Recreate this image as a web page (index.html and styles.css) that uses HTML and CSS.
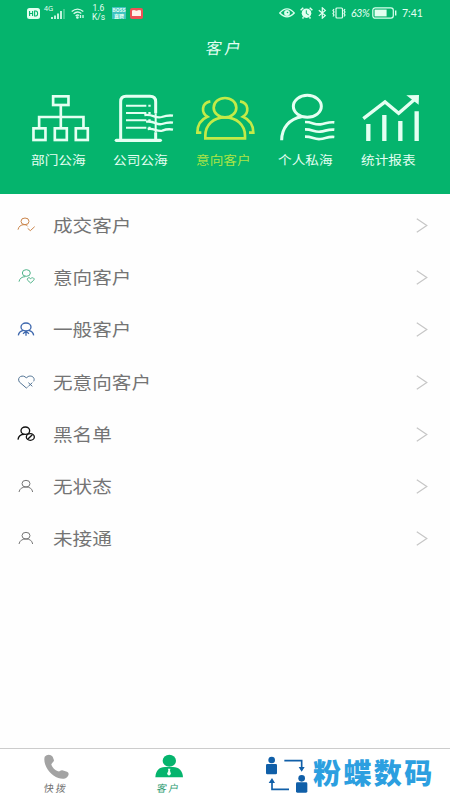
FILE: index.html
```html
<!DOCTYPE html>
<html lang="zh-CN">
<head>
<meta charset="utf-8">
<title>客户</title>
<link rel="stylesheet" href="styles.css">
</head>
<body>
<div class="app">
  <header class="top">
    <div class="status">
      <div class="status-left">
        <svg class="hd" width="13" height="11" viewBox="0 0 13 11"><rect width="13" height="11" rx="2.5" fill="#e2fff0"/><path d="M2.6 3v5M5.6 3v5M2.6 5.5h3M7.6 3v5h1.2q1.8 0 1.8-2.5T8.800 3z" fill="none" stroke="#05b46d" stroke-width="1.1"/></svg>
        <span class="net">4G</span>
        <svg class="signal" width="14" height="11" viewBox="0 0 14 11"><path d="M1 11V9M4 11V7.500M7 11V5.500M10 11V3" stroke="#e2fff0" stroke-width="1.700"/><path d="M13 11V1" stroke="#62d5a2" stroke-width="1.400"/></svg>
        <svg class="wifi" width="14" height="11" viewBox="0 0 14 11" fill="none" stroke="#d5fae8" stroke-width="1.300"><path d="M.7 3.600Q6.500-1.400 12.300 3.600M2.600 5.800Q6.500 2.300 10.300 5.600M4.600 7.900q2-1.700 3.600-.3"/><circle cx="6.400" cy="9.500" r=".7"/><path d="M9.500 7v3M12 7v3"/></svg>
        <span class="speed">1.6<br>K/s</span>
        <span class="tag">BOSS<br>直聘</span>
        <svg class="book" width="13" height="11" viewBox="0 0 13 11"><rect width="13" height="11" rx="2" fill="#ed5155"/><path d="M2 2.600l2-.6 2.500.7L9 2l2 .6V8H2z" fill="#fff1e8"/></svg>
      </div>
      <div class="status-right">
        <svg width="16" height="10" viewBox="0 0 16 10"><path d="M.7 5Q8-3.300 15.300 5 8 12.700.7 5z" fill="none" stroke="#d9ffed" stroke-width="1.200"/><circle cx="8" cy="5" r="2.900" fill="#d9ffed"/><circle cx="8.500" cy="4.500" r=".8" fill="#05b46d"/></svg>
        <svg class="alarm" width="13" height="12" viewBox="0 0 13 12"><circle cx="6.500" cy="6.200" r="4.800" fill="#e2fff0"/><path d="M.6 3.200L3.300.8M12.400 3.200L9.700.8M2.500 11.500l1-1.300M10.500 11.500l-1-1.300" stroke="#e2fff0" stroke-width="1.500"/><path d="M6.300 3.300v3.200l2.400 1.300" fill="none" stroke="#05b46d"/></svg>
        <svg class="bt" width="9" height="12" viewBox="0 0 9 12"><path d="M.8 3.200l6.500 5.300-3 2.700V.8l3 2.600L.8 8.900" fill="none" stroke="#e2fff0" stroke-width="1.200"/></svg>
        <svg class="vib" width="17" height="12" viewBox="0 0 17 12" fill="none" stroke="#e2fff0" stroke-width="1.200"><rect x="5" y="1" width="6.500" height="10" rx="1"/><path d="M3 2L2 3.500 3 5 2 6.500 3 8 2 9.500M14 2l-1 1.500L14 5l-1 1.500L14 8l-1 1.500"/></svg>
        <span class="pct">63%</span>
        <svg class="battery" width="26" height="12" viewBox="0 0 26 12"><rect x=".8" y=".8" width="20.500" height="10.400" rx="2.400" fill="none" stroke="#d9ffed" stroke-width="1.200"/><rect x="2.600" y="2.600" width="12" height="6.800" fill="#e2fff0"/><path d="M23.700 3.500v5" stroke="#d9ffed" stroke-width="1.400"/></svg>
        <span class="time">7:41</span>
      </div>
    </div>
    <h1 class="title"><span class="brush">客户</span></h1>
    <nav class="cats">
      <div class="cat">
        <svg viewBox="24.600 24 180 150"><g stroke-width="8"><rect x="100" y="34" width="46" height="26"/><path d="M123 60v68M58 128V96h133v32"/><rect x="41" y="130" width="36" height="35"/><rect x="105" y="130" width="36" height="35"/><rect x="168" y="130" width="36" height="35"/></g></svg>
        <span class="label">部门公海</span>
      </div>
      <div class="cat">
        <svg viewBox="272 24 180 150"><path d="M301 164V50q0-16 16-16h72q17 0 17 16v35M406 142v22" stroke-width="9"/><path d="M288 166h132" stroke-width="10" stroke-linecap="round"/><path d="M317 62h61M317 84h61M317 106h61M317 128h61" stroke-width="6"/><path d="M384 62h7M384 84h7M384 106h7M384 128h7M406 85v57" stroke-width="6"/><path d="M372 90c28-4 32 12 52 6 12-4 20-6 34-4M377 110c28-4 30 12 48 7 12-4 20-6 33-4M382 132c20-4 26 9 44 5 10-4 18-6 32-3" stroke-width="7"/></svg>
        <span class="label">公司公海</span>
      </div>
      <div class="cat active">
        <svg viewBox="40 24 180 150"><g stroke-width="8"><ellipse cx="136" cy="68" rx="34" ry="29"/><path d="M77 160v-8c0-32 24-55 59-55s60 23 60 55v8zM92 49c-28 5-27 35-9 46-21 9-30 26-30 48h12M181 49c28 5 27 35 9 46 21 9 31 26 31 48h-13"/></g></svg>
        <span class="label">意向客户</span>
      </div>
      <div class="cat">
        <svg viewBox="287 24 180 150"><g stroke-width="9"><ellipse cx="381" cy="64" rx="42" ry="33"/><path d="M304 166c0-38 24-65 60-71"/></g><path d="M374 111c24 0 27 9 46 7 16-2 24-8 42-6M374 133c24 0 27 9 46 7 16-2 24-8 42-6M374 155c24 0 27 9 46 7 16-2 24-8 42-6" stroke-width="8"/></svg>
        <span class="label">个人私海</span>
      </div>
      <div class="cat">
        <svg viewBox="85 24 180 150"><path d="M116 168v-51M164 168V90M212 168v-60M261 168V79" stroke-width="13"/><path d="M101 101l65-50 41 34 50-44" stroke-width="10"/><path class="solid" d="M230 31l38-1-1 29z"/></svg>
        <span class="label">统计报表</span>
      </div>
    </nav>
  </header>

  <main class="list">
    <div class="row"><svg class="ic orange" viewBox="0 0 54 54"><ellipse cx="24" cy="16" rx="12" ry="10"/><path d="M3 41c2-10 9-15 18-15 6 0 9 2 11 5M32 37l8 7 13-12"/></svg><span class="text">成交客户</span><svg class="arrow" viewBox="0 0 12 15"><path d="M.8.8l10 6.700-10 6.700"/></svg></div>
    <div class="row"><svg class="ic green" viewBox="0 0 54 54"><ellipse cx="28" cy="15" rx="12" ry="10"/><path d="M6 41c2-10 9-15 19-15M41 45l-9-8c-4-6 4-11 9-5 5-6 14-1 9 5z"/></svg><span class="text">意向客户</span><svg class="arrow" viewBox="0 0 12 15"><path d="M.8.8l10 6.700-10 6.700"/></svg></div>
    <div class="row"><svg class="ic blue" viewBox="0 0 54 54"><ellipse cx="27" cy="18" rx="15" ry="12"/><path d="M4 43c1-8 7-13 15-15M50 43c-1-8-7-13-15-15M27 44V31M18 38l9-7 9 7"/></svg><span class="text">一般客户</span><svg class="arrow" viewBox="0 0 12 15"><path d="M.8.8l10 6.700-10 6.700"/></svg></div>
    <div class="row"><svg class="ic navy" viewBox="0 0 54 54"><path d="M32 42l-4 3L7 27C-2 11 19 3 28 15 37 3 57 11 50 25M34 29l12 11M46 29L34 40"/></svg><span class="text">无意向客户</span><svg class="arrow" viewBox="0 0 12 15"><path d="M.8.8l10 6.700-10 6.700"/></svg></div>
    <div class="row"><svg class="ic black" viewBox="0 0 54 54"><ellipse cx="25" cy="17" rx="13" ry="11"/><path d="M3 44c1-10 8-16 19-16M32 43l14-14"/><ellipse cx="40" cy="36" rx="12" ry="10"/></svg><span class="text">黑名单</span><svg class="arrow" viewBox="0 0 12 15"><path d="M.8.8l10 6.700-10 6.700"/></svg></div>
    <div class="row"><svg class="ic gray" viewBox="0 0 54 54"><ellipse cx="27" cy="17" rx="12" ry="10"/><path d="M6 42c2-10 9-15 21-15s18 5 20 15"/></svg><span class="text">无状态</span><svg class="arrow" viewBox="0 0 12 15"><path d="M.8.8l10 6.700-10 6.700"/></svg></div>
    <div class="row"><svg class="ic gray" viewBox="0 0 54 54"><ellipse cx="27" cy="17" rx="12" ry="10"/><path d="M6 42c2-10 9-15 21-15s18 5 20 15"/></svg><span class="text">未接通</span><svg class="arrow" viewBox="0 0 12 15"><path d="M.8.8l10 6.700-10 6.700"/></svg></div>
  </main>

  <footer class="tabs">
    <div class="tab">
      <svg width="26" height="26" viewBox="0 0 78 78"><path d="M5 8C12 0 23 0 29 8l4 11c0 6-8 8-8 13 3 9 11 16 20 20 6 2 7-4 13-3l14 4c8 4 5 12 0 17-7 6-17 5-26 2C21 63-1 33 5 8z" fill="#a3a3a3"/></svg>
      <span class="tab-name"><span class="brush">快拨</span></span>
    </div>
    <div class="tab on">
      <svg width="28" height="26" viewBox="0 0 84 78"><ellipse cx="43" cy="20" rx="20" ry="18" fill="#05b46d"/><path d="M1 70c1-20 11-31 29-31h24c18 0 29 11 30 31z" fill="#05b46d"/><path d="M39 44h7l-1 6 3 10-6 5-6-5 4-10z" fill="#effff5"/></svg>
      <span class="tab-name"><span class="brush">客户</span></span>
    </div>
    <div class="brand">
      <svg width="44" height="38" viewBox="120 47 132 114"><g fill="#105fa8"><circle cx="140" cy="59" r="10"/><rect x="123" y="71" width="33" height="31" rx="4"/><circle cx="230" cy="114" r="10"/><rect x="213" y="126" width="34" height="31" rx="4"/><path d="M221 80h18l-9 14zM131 128h19l-9-15z"/></g><path d="M178 61h52v22M141 124v23h51" fill="none" stroke="#105fa8" stroke-width="5"/></svg>
      <span class="brand-name">粉蝶数码</span>
    </div>
  </footer>
</div>
</body>
</html>
```
FILE: styles.css
```css
* { box-sizing: border-box; }
body { margin: 0; background: #fff; font-family: "Noto Sans CJK SC", "Noto Sans", sans-serif; }
.app { width: 450px; height: 800px; display: flex; flex-direction: column; overflow: hidden; background: #fefefe; }
svg { display: block; flex: none; }

.top { height: 194px; background: #05b46d; color: #e6fff3; display: flex; flex-direction: column; flex: none; }
.status { height: 26px; display: flex; justify-content: space-between; padding: 0 26px 0 27px; }
.status-left, .status-right { display: flex; align-items: center; }
.net { font: 7px/10px "Noto Sans", sans-serif; margin: -9px 0 0 4px; width: 8px; }
.signal { margin-left: -1px; }
.wifi { margin-left: 6px; }
.speed { font: 8.500px/9px Roboto, sans-serif; text-align: center; width: 17px; margin-left: 5px; white-space: nowrap; }
.tag { width: 14px; height: 12px; margin-left: 5px; background: #3fc3c0; font-size: 5px; font-weight: 700; line-height: 6px; text-align: center; overflow: hidden; }
.book { margin-left: 4px; }
.alarm { margin-left: 5px; }
.bt { margin-left: 5px; }
.vib { margin-left: 4px; }
.pct { font: italic 400 10.500px/12px Lato, sans-serif; letter-spacing: -.3px; margin-left: 3px; width: 20px; }
.battery { margin-left: 1px; }
.time { font: 400 10.500px/12px Lato, sans-serif; margin-left: 4px; width: 22px; white-space: nowrap; }

.title { margin: 0; height: 42px; font-size: 16px; line-height: 42px; font-weight: 400; text-align: center; }
.brush { display: inline-block; transform: skewX(-9deg); }
.title .brush { letter-spacing: 3px; }

.cats { display: flex; width: 412.500px; margin: 25px 0 0 17px; }
.cat { flex: 1; display: flex; flex-direction: column; align-items: center; }
.cat svg { width: 60px; height: 50px; overflow: visible; fill: none; stroke: #e4fff2; }
.cat .solid { fill: #e4fff2; stroke: none; }
.cat.active svg { stroke: #c3ea48; }
.label { margin-top: 7px; font-size: 12.200px; line-height: 20px; transform: scaleX(1.12); white-space: nowrap; }
.active .label { color: #ace446; }

.list { padding: 5px 22px 0 17px; flex: 1; }
.row { height: 52.300px; display: flex; align-items: center; }
.ic { width: 18px; height: 18px; fill: none; stroke-width: 3; overflow: visible; }
.orange { stroke: #cb854b; }
.green { stroke: #4fb489; }
.blue { stroke: #3d67ad; stroke-width: 4; }
.navy { stroke: #517394; }
.black { stroke: #111; stroke-width: 4; }
.gray { stroke: #777; }
.text { margin: -1px 0 0 18px; font-size: 17.500px; font-weight: 400; line-height: 26px; color: #747474; transform: scaleX(1.12); transform-origin: 0 50%; }
.arrow { width: 12px; height: 15px; margin-left: auto; fill: none; stroke: #c6c6c6; stroke-width: 1.200; }

.tabs { height: 52px; flex: none; border-top: 1px solid #ccc; display: flex; background: #fff; }
.tab { width: 112.500px; display: flex; flex-direction: column; align-items: center; padding-top: 5px; color: #707070; }
.on { color: #2b9a70; }
.tab-name { font-size: 10px; line-height: 16px; margin-top: 0; }
.tab-name .brush { letter-spacing: 2px; }
.brand { display: flex; margin-left: 40px; padding-top: 7px; }
.brand-name { margin-left: 4px; font-size: 28px; line-height: 36px; margin-top: -2px; font-weight: 900; letter-spacing: 2.400px; color: #2c9fe0; white-space: nowrap; }
```
